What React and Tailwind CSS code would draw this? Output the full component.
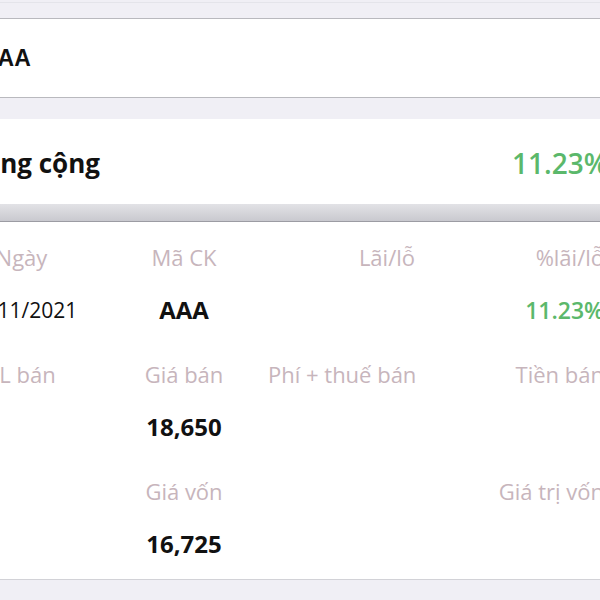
import React from "react";

const label = "text-[22px] leading-[30px] text-[#c7b5bc] whitespace-nowrap";
const value = "text-[24px] leading-[30px] font-bold text-[#111] whitespace-nowrap";

function Cell({ children, className = "" }) {
  return <div className={`h-[30px] ${className}`}>{children}</div>;
}

export default function App() {
  return (
    <div
      className="w-[600px] h-[600px] overflow-hidden bg-[#f0eff5]"
      style={{ fontFamily: '"Open Sans", "Noto Sans", sans-serif' }}
    >
      {/* top band */}
      <div className="h-[17px] border-t border-t-[#e4e4ea] mt-[2px] border-b border-b-[#b9b9be]" />

      {/* stock card */}
      <div className="h-[79px] bg-white border-b border-b-[#b9b9be] flex items-center overflow-hidden">
        <span
          className="ml-[-19px] text-[23px] font-bold text-[#111]"
          style={{ fontFamily: '"Liberation Sans", Arial, sans-serif' }}
        >
          AAA
        </span>
      </div>

      <div className="h-[21px]" />

      {/* total card */}
      <div className="h-[85px] bg-white flex items-center justify-between overflow-hidden">
        <span className="ml-[-31px] mt-[3px] text-[26px] font-bold text-[#111] whitespace-nowrap">Tổng cộng</span>
        <span className="mr-[-8px] mt-[3px] text-[28px] font-semibold text-[#5bb86b] whitespace-nowrap">11.23%</span>
      </div>
      <div className="h-[18px] bg-gradient-to-b from-[#e2e2e6] to-[#c9c9cf] border-b border-b-[#9c9ca3]" />

      {/* detail card */}
      <div className="h-[358px] bg-white border-b border-b-[#d2d2d7] pt-[20px] overflow-hidden">
        <div className="ml-[-57px] w-[661px] grid grid-cols-[157px_168px_147px_189px] gap-y-[23px]">
          {/* row 1 */}
          <Cell className={`${label} text-center`}>Ngày</Cell>
          <Cell className={`${label} text-center`}>Mã CK</Cell>
          <Cell className={`${label} text-right`}>Lãi/lỗ</Cell>
          <Cell className={`${label} text-right`}>%lãi/lỗ</Cell>

          <Cell className="text-[21px] leading-[30px] text-[#111] text-center">15/11/2021</Cell>
          <Cell className={`${value} text-center`}>AAA</Cell>
          <Cell />
          <Cell className="text-[23px] leading-[30px] font-semibold text-[#5bb86b] text-right">11.23%</Cell>

          {/* row 2 */}
          <Cell className={`${label} text-center mt-[11px]`}>SL bán</Cell>
          <Cell className={`${label} text-center mt-[11px]`}>Giá bán</Cell>
          <Cell className={`${label} text-right mt-[11px]`}>Phí + thuế bán</Cell>
          <Cell className={`${label} text-right mt-[11px]`}>Tiền bán</Cell>

          <Cell />
          <Cell className={`${value} text-center`}>18,650</Cell>
          <Cell />
          <Cell />

          {/* row 3 */}
          <Cell className="mt-[11px]" />
          <Cell className={`${label} text-center mt-[11px]`}>Giá vốn</Cell>
          <Cell className="mt-[11px]" />
          <Cell className={`${label} text-right mt-[11px]`}>Giá trị vốn</Cell>

          <Cell />
          <Cell className={`${value} text-center`}>16,725</Cell>
          <Cell />
          <Cell />
        </div>
      </div>
    </div>
  );
}
